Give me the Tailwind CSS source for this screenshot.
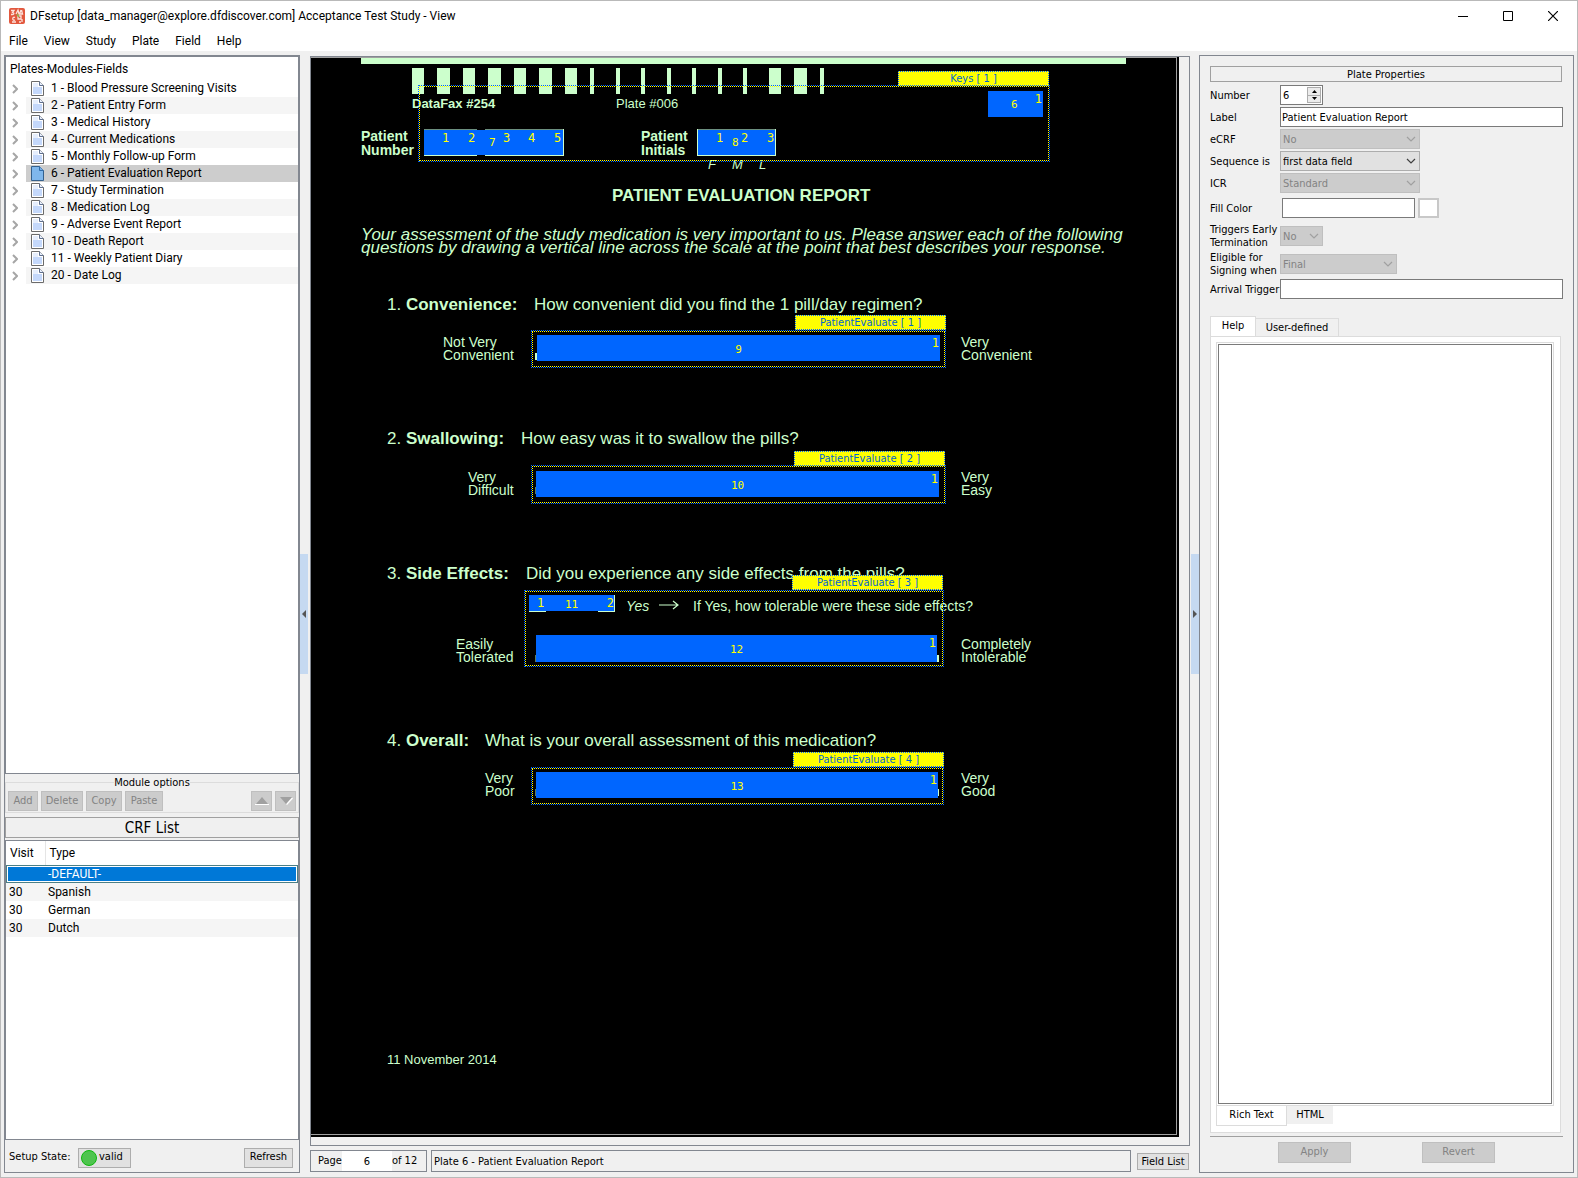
<!DOCTYPE html>
<html lang="en">
<head>
    <meta charset="UTF-8">
    <meta name="viewport" content="width=device-width, initial-scale=1.0">
    <title>DFsetup - Acceptance Test Study - View</title>
    <script src="https://cdn.jsdelivr.net/npm/@tailwindcss/browser@4"></script>
</head>
<body class="h-screen overflow-hidden flex flex-col bg-[#f0f0f0] border border-[#b9b9b9] text-black text-[11px] font-['DejaVu_Sans_Condensed','Noto_Sans',sans-serif]">
    <!-- Shared symbols -->
    <svg class="hidden">
        <symbol id="page-icon" viewBox="0 0 13 15">
            <path d="M.5.5h8l4 4v10H.5z" fill="#fff" stroke="#6b6b6b"/>
            <path d="M2 6h9v7H2z" fill="#c4d8fb"/>
            <path d="M2 2h5v4H2z" fill="#e6eefd"/>
            <path d="M8.500 .5v4h4" fill="#e8f0ff" stroke="#5f6f8c"/>
        </symbol>
        <symbol id="branch" viewBox="0 0 6 10">
            <path d="M1 1l4 4-4 4" fill="none" stroke="#a6a6a6" stroke-width="2"/>
        </symbol>
        <symbol id="chevron" viewBox="0 0 10 6">
            <path d="M1 1l4 4 4-4" fill="none" stroke="currentColor" stroke-width="1.200"/>
        </symbol>
    </svg>

    <!-- Title bar -->
    <header class="bg-white font-[Roboto,'Noto_Sans',sans-serif] text-[12px] shrink-0">
        <div class="h-[30px] flex items-center pl-2">
            <svg class="w-4 h-4 mr-[5px]" viewBox="0 0 16 16">
                <rect width="16" height="16" rx="2" fill="#e2583e"/>
                <path d="M2 2.500h3l-1.500 2c2 0 2 2.500-1.500 2M7 6l2-4 1 4M12 2l-1.500 4h3L12.500 2M6 9.500c-3-1.500-3 4 0 2.500M3 14h4M9 8h3v3H9zM13 11v3M10 14h2" fill="none" stroke="#fbe3dd" stroke-width="1.300"/>
                <path d="M8 6l2 3" stroke="#8fae4d" stroke-width="1.500"/>
            </svg>
            <h1>DFsetup [data_manager@explore.dfdiscover.com] Acceptance Test Study - View</h1>
            <div class="ml-auto flex mr-[2px]">
                <button aria-label="Minimize" class="w-[45px] h-7 flex items-center justify-center"><svg class="w-[10px] h-[10px]" viewBox="0 0 10 10"><path d="M0 5.500h10" stroke="#000"/></svg></button>
                <button aria-label="Maximize" class="w-[45px] h-7 flex items-center justify-center"><svg class="w-[10px] h-[10px]" viewBox="0 0 10 10"><path d="M.5.5h9v9h-9z" fill="none" stroke="#000"/></svg></button>
                <button aria-label="Close" class="w-[45px] h-7 flex items-center justify-center"><svg class="w-[10px] h-[10px]" viewBox="0 0 10 10"><path d="M0 0l10 10M10 0L0 10" stroke="#000" stroke-width="1.200"/></svg></button>
            </div>
        </div>
        <nav class="h-5 flex gap-4 pl-2 items-start leading-[21px]">
            <a href="#">File</a>
            <a href="#">View</a>
            <a href="#">Study</a>
            <a href="#">Plate</a>
            <a href="#">Field</a>
            <a href="#">Help</a>
        </nav>
    </header>

    <main class="flex-1 min-h-0 flex pl-[3px] pr-[3px] pt-1 pb-1">
        <!-- Left column: plate tree and CRF list -->
        <aside class="w-[296px] shrink-0 flex flex-col border border-[#828790]">
            <section class="h-[718px] bg-white border border-[#828790] font-[Roboto,'Noto_Sans',sans-serif] text-[12px]">
                <h2 class="h-[23px] pl-1 leading-6">Plates-Modules-Fields</h2>
                <ul class="leading-[17px]">
                    <li class="flex items-center h-[17px] pl-[6px]"><svg class="w-[6px] h-[10px] mr-2"><use href="#branch"/></svg><span class="flex-1 flex items-center pl-[5px] gap-[7px]"><svg class="w-[13px] h-[15px]"><use href="#page-icon"/></svg>1 - Blood Pressure Screening Visits</span></li>
                    <li class="flex items-center h-[17px] pl-[6px]"><svg class="w-[6px] h-[10px] mr-2"><use href="#branch"/></svg><span class="flex-1 flex items-center pl-[5px] gap-[7px] bg-[#f5f5f5]"><svg class="w-[13px] h-[15px]"><use href="#page-icon"/></svg>2 - Patient Entry Form</span></li>
                    <li class="flex items-center h-[17px] pl-[6px]"><svg class="w-[6px] h-[10px] mr-2"><use href="#branch"/></svg><span class="flex-1 flex items-center pl-[5px] gap-[7px]"><svg class="w-[13px] h-[15px]"><use href="#page-icon"/></svg>3 - Medical History</span></li>
                    <li class="flex items-center h-[17px] pl-[6px]"><svg class="w-[6px] h-[10px] mr-2"><use href="#branch"/></svg><span class="flex-1 flex items-center pl-[5px] gap-[7px] bg-[#f5f5f5]"><svg class="w-[13px] h-[15px]"><use href="#page-icon"/></svg>4 - Current Medications</span></li>
                    <li class="flex items-center h-[17px] pl-[6px]"><svg class="w-[6px] h-[10px] mr-2"><use href="#branch"/></svg><span class="flex-1 flex items-center pl-[5px] gap-[7px]"><svg class="w-[13px] h-[15px]"><use href="#page-icon"/></svg>5 - Monthly Follow-up Form</span></li>
                    <li class="flex items-center h-[17px] pl-[6px]"><svg class="w-[6px] h-[10px] mr-2"><use href="#branch"/></svg><span class="flex-1 flex items-center pl-[5px] gap-[7px] bg-[#cdcdcd]"><svg class="w-[13px] h-[15px]" viewBox="0 0 13 15"><path d="M.5.5h8l4 4v10H.5z" fill="#7fb7ec" stroke="#34608c"/><path d="M8.500 .5v4h4" fill="#79aee6" stroke="#2f6ba8"/></svg>6 - Patient Evaluation Report</span></li>
                    <li class="flex items-center h-[17px] pl-[6px]"><svg class="w-[6px] h-[10px] mr-2"><use href="#branch"/></svg><span class="flex-1 flex items-center pl-[5px] gap-[7px]"><svg class="w-[13px] h-[15px]"><use href="#page-icon"/></svg>7 - Study Termination</span></li>
                    <li class="flex items-center h-[17px] pl-[6px]"><svg class="w-[6px] h-[10px] mr-2"><use href="#branch"/></svg><span class="flex-1 flex items-center pl-[5px] gap-[7px] bg-[#f5f5f5]"><svg class="w-[13px] h-[15px]"><use href="#page-icon"/></svg>8 - Medication Log</span></li>
                    <li class="flex items-center h-[17px] pl-[6px]"><svg class="w-[6px] h-[10px] mr-2"><use href="#branch"/></svg><span class="flex-1 flex items-center pl-[5px] gap-[7px]"><svg class="w-[13px] h-[15px]"><use href="#page-icon"/></svg>9 - Adverse Event Report</span></li>
                    <li class="flex items-center h-[17px] pl-[6px]"><svg class="w-[6px] h-[10px] mr-2"><use href="#branch"/></svg><span class="flex-1 flex items-center pl-[5px] gap-[7px] bg-[#f5f5f5]"><svg class="w-[13px] h-[15px]"><use href="#page-icon"/></svg>10 - Death Report</span></li>
                    <li class="flex items-center h-[17px] pl-[6px]"><svg class="w-[6px] h-[10px] mr-2"><use href="#branch"/></svg><span class="flex-1 flex items-center pl-[5px] gap-[7px]"><svg class="w-[13px] h-[15px]"><use href="#page-icon"/></svg>11 - Weekly Patient Diary</span></li>
                    <li class="flex items-center h-[17px] pl-[6px]"><svg class="w-[6px] h-[10px] mr-2"><use href="#branch"/></svg><span class="flex-1 flex items-center pl-[5px] gap-[7px] bg-[#f5f5f5]"><svg class="w-[13px] h-[15px]"><use href="#page-icon"/></svg>20 - Date Log</span></li>
                </ul>
            </section>

            <fieldset class="border border-[#dcdcdc] px-[2px] pb-px">
                <legend class="mx-auto leading-[17px]">Module options</legend>
                <div class="flex gap-[3px] h-5 text-[#838383]">
                    <button disabled class="w-[30px] bg-[#ccc] border border-[#bfbfbf]">Add</button>
                    <button disabled class="w-[42px] bg-[#ccc] border border-[#bfbfbf]">Delete</button>
                    <button disabled class="w-[36px] bg-[#ccc] border border-[#bfbfbf]">Copy</button>
                    <button disabled class="w-[38px] bg-[#ccc] border border-[#bfbfbf]">Paste</button>
                    <button disabled aria-label="Move up" class="ml-auto w-[21px] bg-[#ccc] border border-[#bfbfbf] flex items-center justify-center"><svg class="w-[14px] h-2" viewBox="0 0 14 8"><path d="M0 7.500h14" stroke="#fff"/><path d="M7 0l6 7H1z" fill="#a0a0a0"/></svg></button>
                    <button disabled aria-label="Move down" class="w-[21px] bg-[#ccc] border border-[#bfbfbf] flex items-center justify-center"><svg class="w-[14px] h-2" viewBox="0 0 14 8"><path d="M13.500 1L7.500 7.500" stroke="#fff" stroke-width="1.500"/><path d="M7 7L1 0h12z" fill="#a0a0a0"/></svg></button>
                </div>
            </fieldset>

            <h2 class="mt-1 mb-[2px] h-[21px] border border-[#a0a0a0] text-center text-[15px] leading-[20px]">CRF List</h2>

            <section class="flex-1 bg-white border border-[#828790] font-[Roboto,'Noto_Sans',sans-serif] text-[12px]">
                <table class="w-full text-left border-collapse">
                    <thead>
                        <tr class="h-6">
                            <th class="w-[39px] pl-1 font-normal border-r border-[#e5e5e5]">Visit</th>
                            <th class="pl-1 font-normal">Type</th>
                        </tr>
                    </thead>
                    <tbody class="leading-[18px]">
                        <tr class="bg-[#0078d7] text-white outline outline-[#4b7f86] -outline-offset-1 shadow-[inset_0_0_0_2px_#fff]">
                            <td class="h-[18px] pl-[3px]"></td>
                            <td class="pl-[3px]">-DEFAULT-</td>
                        </tr>
                        <tr class="bg-[#f5f5f5]">
                            <td class="pl-[3px]">30</td>
                            <td class="pl-[3px]">Spanish</td>
                        </tr>
                        <tr>
                            <td class="pl-[3px]">30</td>
                            <td class="pl-[3px]">German</td>
                        </tr>
                        <tr class="bg-[#f5f5f5]">
                            <td class="pl-[3px]">30</td>
                            <td class="pl-[3px]">Dutch</td>
                        </tr>
                    </tbody>
                </table>
            </section>

            <footer class="h-8 shrink-0 flex items-center pl-1 pr-[6px] pt-[3px]">
                <span class="w-[69px]">Setup State:</span>
                <button class="w-[53px] h-5 bg-[#e1e1e1] border border-[#adadad] flex items-center pl-[2px] gap-[2px]">
                    <svg class="w-4 h-4" viewBox="0 0 16 16"><circle cx="8" cy="8" r="7.500" fill="#4ec44e" stroke="#0db80d"/></svg>
                    valid
                </button>
                <button class="ml-auto w-[49px] h-5 bg-[#e1e1e1] border border-[#adadad]">Refresh</button>
            </footer>
        </aside>

        <!-- Left splitter -->
        <div class="w-[10px] shrink-0 flex items-center">
            <button aria-label="Collapse left panel" class="w-2 h-[120px] bg-[#c5d9f1] flex items-center justify-center"><svg class="w-1 h-2" viewBox="0 0 4 8"><path d="M4 0v8L0 4z" fill="#555"/></svg></button>
        </div>

        <!-- Plate view -->
        <div class="flex-1 min-w-0 flex flex-col pt-px">
            <div class="flex-1 min-h-0 border border-[#828790] pr-[10px] pb-2">
                <div class="h-full border-b-2 border-r-2 border-black">
                <div class="relative h-full overflow-hidden bg-black border-t border-r border-b border-[#a0a0a0] text-[#ccffcc] font-['Liberation_Sans',Arial,sans-serif] text-[14px] leading-[13px] whitespace-nowrap">
                    <svg class="absolute left-[50px] top-0 w-[765px] h-[36px]" viewBox="0 0 765 36" fill="#ccffcc">
                        <rect width="765" height="6"/>
                        <path d="M51 10h12v26h-12zM76 10h13v26h-13zM102 10h12v26h-12zM127 10h13v26h-13zM153 10h12v26h-12zM178 10h13v26h-13zM204 10h12v26h-12zM229 10h4v26h-4zM255 10h4v26h-4zM280 10h4v26h-4zM306 10h4v26h-4zM331 10h4v26h-4zM357 10h4v26h-4zM382 10h4v26h-4zM408 10h12v26h-12zM433 10h13v26h-13zM459 10h4v26h-4z"/>
                    </svg>
                    <span class="absolute left-[101px] top-[39px] text-[13px] font-bold">DataFax #254</span>
                    <span class="absolute left-[305px] top-[39px] text-[13px]">Plate #006</span>
                    <span class="absolute left-[50px] top-[71px] leading-[14px] font-bold">Patient<br>Number</span>
                    <span class="absolute left-[330px] top-[71px] leading-[14px] font-bold">Patient<br>Initials</span>
                    <span class="absolute left-[397px] top-[100px] text-[13px] italic">F</span>
                    <span class="absolute left-[421px] top-[100px] text-[13px] italic">M</span>
                    <span class="absolute left-[448px] top-[100px] text-[13px] italic">L</span>
                    <h2 class="absolute left-[301px] top-[131px] text-[17px] font-bold">PATIENT EVALUATION REPORT</h2>
                    <p class="absolute left-[50px] top-[170px] text-[17px] italic">Your assessment of the study medication is very important to us. Please answer each of the following<br>questions by drawing a vertical line across the scale at the point that best describes your response.</p>

                    <p class="absolute left-[76px] top-[240px] text-[17px]">1. <b>Convenience:</b></p>
                    <p class="absolute left-[223px] top-[240px] text-[17px]">How convenient did you find the 1 pill/day regimen?</p>
                    <span class="absolute left-[132px] top-[278px]">Not Very<br>Convenient</span>
                    <span class="absolute left-[650px] top-[278px]">Very<br>Convenient</span>

                    <p class="absolute left-[76px] top-[374px] text-[17px]">2. <b>Swallowing:</b></p>
                    <p class="absolute left-[210px] top-[374px] text-[17px]">How easy was it to swallow the pills?</p>
                    <span class="absolute left-[157px] top-[413px]">Very<br>Difficult</span>
                    <span class="absolute left-[650px] top-[413px]">Very<br>Easy</span>

                    <p class="absolute left-[76px] top-[509px] text-[17px]">3. <b>Side Effects:</b></p>
                    <p class="absolute left-[215px] top-[509px] text-[17px]">Did you experience any side effects from the pills?</p>
                    <span class="absolute left-[315px] top-[542px] italic">Yes</span>
                    <svg class="absolute left-[348px] top-[542px] w-5 h-[10px]" viewBox="0 0 20 10" fill="none" stroke="#ccffcc" stroke-width="1.200"><path d="M0 5h19M14 1l5 4-5 4"/></svg>
                    <span class="absolute left-[382px] top-[542px]">If Yes, how tolerable were these side effects?</span>
                    <span class="absolute left-[145px] top-[580px]">Easily<br>Tolerated</span>
                    <span class="absolute left-[650px] top-[580px]">Completely<br>Intolerable</span>

                    <p class="absolute left-[76px] top-[676px] text-[17px]">4. <b>Overall:</b></p>
                    <p class="absolute left-[174px] top-[676px] text-[17px]">What is your overall assessment of this medication?</p>
                    <span class="absolute left-[174px] top-[714px]">Very<br>Poor</span>
                    <span class="absolute left-[650px] top-[714px]">Very<br>Good</span>

                    <span class="absolute left-[76px] top-[995px] text-[13px]">11 November 2014</span>

                    <!-- Keys module -->
                    <div class="absolute left-[107px] top-[27px] w-[632px] h-[77px] border border-dotted border-[#0066ff] outline-1 outline-dotted outline-[#ffff00] -outline-offset-2"></div>
                    <div class="absolute left-[587px] top-[13px] w-[151px] h-[15px] bg-[#ffff00] border border-dotted border-[#0066ff] text-[#0066cc] text-center text-[11px] leading-[14px] font-['DejaVu_Sans_Condensed','Noto_Sans',sans-serif]">Keys [ 1 ]</div>
                    <div class="absolute left-[677px] top-[33px] w-[55px] h-[26px] bg-[#0066ff] text-[#ffff00] text-[11px] leading-[14px] font-['DejaVu_Sans_Mono',monospace]"><span class="absolute left-[23px] top-[7px]">6</span><span class="absolute right-[1px] top-[1px] text-[12px]">1</span></div>
                    <svg class="absolute left-[113px] top-[71px] w-[140px] h-[27px]" viewBox="0 0 140 27"><path d="M0 1h139v25H0z" fill="#0066ff"/><path d="M0 .5h53M61 .5h78" stroke="#6b8f7f"/><path d="M0 26.500h53M61 26.500h79M139.500 0v27" stroke="#ccffcc"/></svg>
                    <div class="absolute left-[113px] top-[71px] w-[139px] h-[27px] text-[#ffff00] text-[12px] leading-[14px] font-['DejaVu_Sans_Mono',monospace]">
                        <span class="absolute left-[18px] top-[2px]">1</span>
                        <span class="absolute left-[44px] top-[2px]">2</span>
                        <span class="absolute left-[65px] top-[7px] text-[11px]">7</span>
                        <span class="absolute left-[79px] top-[2px]">3</span>
                        <span class="absolute left-[104px] top-[2px]">4</span>
                        <span class="absolute left-[130px] top-[2px]">5</span>
                    </div>
                    <svg class="absolute left-[386px] top-[71px] w-[79px] h-[27px]" viewBox="0 0 79 27"><path d="M0 1h78v25H0z" fill="#0066ff"/><path d="M0 .5h78" stroke="#6b8f7f"/><path d="M0 26.500h78M.5 0v27M78.500 0v27" stroke="#ccffcc"/></svg>
                    <div class="absolute left-[386px] top-[71px] w-[79px] h-[27px] text-[#ffff00] text-[12px] leading-[14px] font-['DejaVu_Sans_Mono',monospace]">
                        <span class="absolute left-[19px] top-[2px]">1</span>
                        <span class="absolute left-[35px] top-[7px] text-[11px]">8</span>
                        <span class="absolute left-[44px] top-[2px]">2</span>
                        <span class="absolute left-[70px] top-[2px]">3</span>
                    </div>

                    <!-- PatientEvaluate modules -->
                    <div class="absolute left-[220px] top-[272px] w-[415px] h-[38px] border border-dotted border-[#0066ff] outline-1 outline-dotted outline-[#ffff00] -outline-offset-2"></div>
                    <div class="absolute left-[484px] top-[257px] w-[151px] h-[15px] bg-[#ffff00] border border-dotted border-[#0066ff] text-[#0066cc] text-center text-[11px] leading-[14px] font-['DejaVu_Sans_Condensed','Noto_Sans',sans-serif]">PatientEvaluate [ 1 ]</div>
                    <div class="absolute left-[224px] top-[295px] w-[3px] h-[7px] bg-[#ccffcc]"></div>
                    <div class="absolute left-[226px] top-[277px] w-[403px] h-[26px] bg-[#0066ff] text-[#ffff00] text-[11px] text-center leading-[29px] font-['DejaVu_Sans_Mono',monospace]">9<span class="absolute right-[1px] top-[1px] text-[12px] leading-[14px]">1</span></div>

                    <div class="absolute left-[220px] top-[407px] w-[415px] h-[39px] border border-dotted border-[#0066ff] outline-1 outline-dotted outline-[#ffff00] -outline-offset-2"></div>
                    <div class="absolute left-[483px] top-[393px] w-[151px] h-[15px] bg-[#ffff00] border border-dotted border-[#0066ff] text-[#0066cc] text-center text-[11px] leading-[14px] font-['DejaVu_Sans_Condensed','Noto_Sans',sans-serif]">PatientEvaluate [ 2 ]</div>
                    <div class="absolute left-[224px] top-[429px] w-[2px] h-[7px] bg-[#5d7a5d]"></div>
                    <div class="absolute left-[225px] top-[413px] w-[403px] h-[26px] bg-[#0066ff] text-[#ffff00] text-[11px] text-center leading-[29px] font-['DejaVu_Sans_Mono',monospace]">10<span class="absolute right-[1px] top-[1px] text-[12px] leading-[14px]">1</span></div>

                    <div class="absolute left-[213px] top-[532px] w-[420px] h-[77px] border border-dotted border-[#0066ff] outline-1 outline-dotted outline-[#ffff00] -outline-offset-2"></div>
                    <div class="absolute left-[481px] top-[517px] w-[151px] h-[15px] bg-[#ffff00] border border-dotted border-[#0066ff] text-[#0066cc] text-center text-[11px] leading-[14px] font-['DejaVu_Sans_Condensed','Noto_Sans',sans-serif]">PatientEvaluate [ 3 ]</div>
                    <svg class="absolute left-[218px] top-[537px] w-[86px] h-[17px]" viewBox="0 0 86 17"><path d="M0 0h85v16H0z" fill="#0066ff"/><path d="M0 16.500h17M69 16.500h17M85.500 0v17" stroke="#ccffcc"/></svg>
                    <div class="absolute left-[218px] top-[537px] w-[85px] h-4 text-[#ffff00] text-[11px] text-center leading-[19px] font-['DejaVu_Sans_Mono',monospace]"><span class="absolute left-[8px] top-[1px] text-[12px] leading-[14px]">1</span>11<span class="absolute right-0 top-[1px] text-[12px] leading-[14px]">2</span></div>
                    <div class="absolute left-[224px] top-[597px] w-[2px] h-[7px] bg-[#5d7a5d]"></div>
                    <div class="absolute left-[626px] top-[597px] w-[2px] h-[7px] bg-[#ccffcc]"></div>
                    <div class="absolute left-[225px] top-[577px] w-[401px] h-[27px] bg-[#0066ff] text-[#ffff00] text-[11px] text-center leading-[30px] font-['DejaVu_Sans_Mono',monospace]">12<span class="absolute right-[1px] top-[1px] text-[12px] leading-[14px]">1</span></div>

                    <div class="absolute left-[220px] top-[709px] w-[413px] h-[38px] border border-dotted border-[#0066ff] outline-1 outline-dotted outline-[#ffff00] -outline-offset-2"></div>
                    <div class="absolute left-[482px] top-[694px] w-[151px] h-[15px] bg-[#ffff00] border border-dotted border-[#0066ff] text-[#0066cc] text-center text-[11px] leading-[14px] font-['DejaVu_Sans_Condensed','Noto_Sans',sans-serif]">PatientEvaluate [ 4 ]</div>
                    <div class="absolute left-[224px] top-[731px] w-[2px] h-[7px] bg-[#5d7a5d]"></div>
                    <div class="absolute left-[627px] top-[731px] w-px h-[7px] bg-[#ccffcc]"></div>
                    <div class="absolute left-[225px] top-[714px] w-[402px] h-[26px] bg-[#0066ff] text-[#ffff00] text-[11px] text-center leading-[29px] font-['DejaVu_Sans_Mono',monospace]">13<span class="absolute right-[1px] top-[1px] text-[12px] leading-[14px]">1</span></div>
                </div>
                </div>
            </div>

            <!-- Status bar -->
            <div class="h-[22px] mt-1 mb-px shrink-0 flex items-center">
                <div class="w-[117px] h-full border border-[#828790] flex items-center pl-[7px]">
                    <label for="page-number">Page</label>
                    <input id="page-number" type="text" value="6" class="w-[50px] h-full bg-white text-center">
                    <span>of 12</span>
                </div>
                <div class="flex-1 h-full ml-1 mr-[6px] border border-[#828790] pl-[2px] leading-[21px]">Plate 6 - Patient Evaluation Report</div>
                <button class="w-[52px] h-[17px] mr-px bg-[#e1e1e1] border border-[#adadad] leading-[15px]">Field List</button>
            </div>
        </div>

        <!-- Right splitter -->
        <div class="w-[9px] shrink-0 flex items-center justify-end">
            <button aria-label="Collapse right panel" class="w-2 h-[120px] bg-[#c5d9f1] flex items-center justify-center"><svg class="w-1 h-2" viewBox="0 0 4 8"><path d="M0 0v8l4-4z" fill="#555"/></svg></button>
        </div>

        <!-- Plate properties -->
        <aside class="w-[375px] shrink-0 border border-[#828790] pl-[10px] pr-[10px] pt-[10px] pb-[9px] flex flex-col">
            <h2 class="h-4 border border-[#a0a0a0] text-center leading-4 mr-px">Plate Properties</h2>
            <form class="grid grid-cols-[70px_1fr] items-center mt-[3px] gap-y-[2px] leading-[13px]">
                <label for="plate-number">Number</label>
                <div class="w-[43px] h-5 border border-[#7a7a7a] bg-white flex">
                    <input id="plate-number" type="text" value="6" class="w-[26px] pl-[2px]">
                    <span class="flex flex-col w-[14px] my-px">
                        <button type="button" aria-label="Increase" class="flex-1 bg-[#ececec] border border-[#adadad] flex items-center justify-center"><svg class="w-[5px] h-[3px]" viewBox="0 0 5 3"><path d="M0 3h5L2.500 0z"/></svg></button>
                        <button type="button" aria-label="Decrease" class="flex-1 bg-[#ececec] border border-t-0 border-[#adadad] flex items-center justify-center"><svg class="w-[5px] h-[3px]" viewBox="0 0 5 3"><path d="M0 0h5L2.500 3z"/></svg></button>
                    </span>
                </div>
                <label for="plate-label">Label</label>
                <input id="plate-label" type="text" value="Patient Evaluation Report" class="h-5 border border-[#7a7a7a] bg-white pl-px">
                <label for="ecrf">eCRF</label>
                <div class="grid w-[140px] items-center text-[#838383]">
                    <select id="ecrf" disabled class="col-start-1 row-start-1 appearance-none h-5 bg-[#ccc] border border-[#bfbfbf] pl-[2px] opacity-100"><option>No</option></select>
                    <svg class="col-start-1 row-start-1 justify-self-end mr-1 w-[10px] h-[6px] text-[#a0a0a0] pointer-events-none"><use href="#chevron"/></svg>
                </div>
                <label for="sequence">Sequence is</label>
                <div class="grid w-[140px] items-center">
                    <select id="sequence" class="col-start-1 row-start-1 appearance-none h-5 bg-[#e1e1e1] border border-[#adadad] pl-[2px]"><option>first data field</option></select>
                    <svg class="col-start-1 row-start-1 justify-self-end mr-1 w-[10px] h-[6px] text-[#404040] pointer-events-none"><use href="#chevron"/></svg>
                </div>
                <label for="icr">ICR</label>
                <div class="grid w-[140px] items-center text-[#838383]">
                    <select id="icr" disabled class="col-start-1 row-start-1 appearance-none h-5 bg-[#ccc] border border-[#bfbfbf] pl-[2px] opacity-100"><option>Standard</option></select>
                    <svg class="col-start-1 row-start-1 justify-self-end mr-1 w-[10px] h-[6px] text-[#a0a0a0] pointer-events-none"><use href="#chevron"/></svg>
                </div>
                <label for="fill-color">Fill Color</label>
                <div class="flex gap-[3px] pl-[2px] pt-[3px] pb-[3px]">
                    <input id="fill-color" type="text" class="w-[133px] h-5 border border-[#7a7a7a] bg-white">
                    <button type="button" aria-label="Pick fill color" class="w-[21px] h-5 bg-white border-2 border-[#c8c8c8]"></button>
                </div>
                <label for="early-termination">Triggers Early Termination</label>
                <div class="grid w-[43px] items-center text-[#838383]">
                    <select id="early-termination" disabled class="col-start-1 row-start-1 appearance-none h-5 bg-[#ccc] border border-[#bfbfbf] pl-[2px] opacity-100"><option>No</option></select>
                    <svg class="col-start-1 row-start-1 justify-self-end mr-1 w-[10px] h-[6px] text-[#a0a0a0] pointer-events-none"><use href="#chevron"/></svg>
                </div>
                <label for="signing">Eligible for<br>Signing when</label>
                <div class="grid w-[117px] items-center text-[#838383]">
                    <select id="signing" disabled class="col-start-1 row-start-1 appearance-none h-5 bg-[#ccc] border border-[#bfbfbf] pl-[2px] opacity-100"><option>Final</option></select>
                    <svg class="col-start-1 row-start-1 justify-self-end mr-1 w-[10px] h-[6px] text-[#a0a0a0] pointer-events-none"><use href="#chevron"/></svg>
                </div>
                <label for="arrival-trigger" class="whitespace-nowrap">Arrival Trigger</label>
                <input id="arrival-trigger" type="text" class="h-5 border border-[#7a7a7a] bg-white">
            </form>

            <div class="mt-[17px] flex items-end">
                <button class="w-[46px] h-5 bg-white border border-b-0 border-[#dcdcdc]">Help</button>
                <button class="w-[83px] h-[18px] border border-l-0 border-b-0 border-[#dcdcdc] leading-[18px]">User-defined</button>
            </div>
            <div class="flex-1 min-h-0 mr-[2px] bg-white border border-[#dcdcdc] p-[5px] pb-[6px] flex flex-col">
                <div class="flex-1 border border-[#dcdcdc] p-px mr-px flex">
                    <textarea aria-label="Help text" class="flex-1 resize-none bg-white border border-[#7a7a7a]"></textarea>
                </div>
                <div class="flex items-start">
                    <button class="w-[71px] h-5 bg-white border border-t-0 border-[#dcdcdc]">Rich Text</button>
                    <button class="w-[46px] h-[18px] bg-[#f0f0f0]">HTML</button>
                </div>
            </div>
            <hr class="mt-[3px] border-[#a0a0a0]">
            <div class="mt-[5px] grid grid-cols-[68px_73px_71px_73px] text-[#838383]">
                <button disabled class="col-start-2 h-[21px] bg-[#ccc] border border-[#bfbfbf]">Apply</button>
                <button disabled class="col-start-4 h-[21px] bg-[#ccc] border border-[#bfbfbf]">Revert</button>
            </div>
        </aside>
    </main>
</body>
</html>
